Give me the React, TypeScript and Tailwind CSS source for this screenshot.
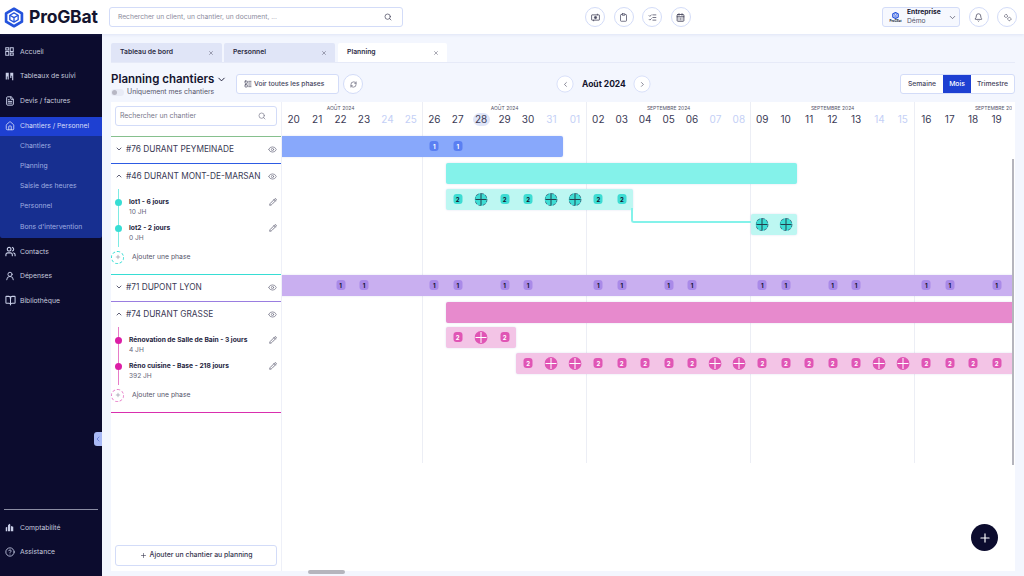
import React from 'react';
import {
  Bell,
  BookOpen,
  CalendarDays,
  ChevronDown,
  ChevronLeft,
  ChevronRight,
  ChevronUp,
  CircleHelp,
  Clipboard,
  Eye,
  FileText,
  House,
  LayoutList,
  ListChecks,
  Pencil,
  Plus,
  RefreshCw,
  Search,
  UserRound,
  Users,
  X,
} from 'lucide-react';

const FONT = 'font-["Inter","Liberation_Sans",sans-serif]';

// one day column in the planning, the first visible week is scrolled by one day
const DAY = 23.43;

const Logo = ({ className, small }: { className: string; small?: boolean }) => (
  <svg viewBox="0 0 24 24" className={className} fill="none" stroke="#2453dc" strokeLinejoin="round">
    <path d="M12 1.500 21.500 7v10L12 22.500 2.500 17V7z" strokeWidth={small ? 4 : 3.2} />
    <path d="M12 6.500 17 9.300v5.400l-5 2.800-5-2.800V9.300z" strokeWidth="1.600" />
    <path d="M7 9.300l5 2.800 5-2.800M12 12.100v5.400" strokeWidth="1.600" />
  </svg>
);

const GridIcon = () => (
  <svg viewBox="0 0 12 12" className="h-[9px] w-[9px]" fill="none" stroke="#c9cfe8" strokeWidth="1.300">
    <rect x="1" y="1" width="4" height="3" />
    <rect x="7" y="1" width="4" height="5" />
    <rect x="1" y="6" width="4" height="5" />
    <rect x="7" y="8" width="4" height="3" />
  </svg>
);

const BoardIcon = () => (
  <svg viewBox="0 0 12 12" className="h-[9px] w-[9px]" fill="#c9cfe8">
    <path d="M1 1h4v9H3.500V6H2.500v4H1zM7 1h4v10H9.500V5h-1v3H7z" />
  </svg>
);

const ChartIcon = () => (
  <svg viewBox="0 0 12 12" className="h-[9px] w-[9px]" fill="#c9cfe8">
    <path d="M1 11V6l2-1v6zM4 11V3l2-2 1 1v9zM8 11V4l3 1v6z" />
  </svg>
);

const GearsIcon = () => (
  <svg viewBox="0 0 12 12" className="h-[9px] w-[9px]" fill="none" stroke="#4a4a60" strokeWidth="1.100">
    <circle cx="4" cy="4" r="2" strokeDasharray="1.500 .6" />
    <circle cx="8.500" cy="8" r="2.200" strokeDasharray="1.500 .6" />
  </svg>
);

const MoneyIcon = () => (
  <svg viewBox="0 0 12 12" className="h-[9px] w-[9px]" fill="none" stroke="#4a4a60" strokeWidth="1.100">
    <rect x=".8" y="2.500" width="10.400" height="7" rx=".5" />
    <circle cx="6" cy="6" r="1.500" fill="#4a4a60" />
    <path d="M8.500 1v2M3.500 9v2" />
  </svg>
);

const menuTop = [
  { label: 'Accueil', icon: <GridIcon /> },
  { label: 'Tableaux de suivi', icon: <BoardIcon /> },
  { label: 'Devis / factures', icon: <FileText className="h-[10px] w-[10px]" strokeWidth={2.4} /> },
];
const subMenu = ['Chantiers', 'Planning', 'Saisie des heures', 'Personnel', "Bons d'intervention"];
const menuMid = [
  { label: 'Contacts', icon: <Users className="h-[11px] w-[11px]" strokeWidth={2.4} /> },
  { label: 'Dépenses', icon: <UserRound className="h-[10px] w-[10px]" strokeWidth={2.2} /> },
  { label: 'Bibliothèque', icon: <BookOpen className="h-[11px] w-[11px]" strokeWidth={2.2} /> },
];

const MenuItem = ({ label, icon }: { label: string; icon: React.ReactNode }) => (
  <div className="flex h-[24.500px] items-center pl-[5px] text-[6.800px] text-[#c6cade]">
    <span className="flex w-[15px] items-center text-[#c9cfe8]">{icon}</span>
    {label}
  </div>
);

const Sidebar = () => (
  <aside className="relative flex w-[102px] shrink-0 flex-col bg-[#0c0c2e] pt-[5.500px]">
    {menuTop.map((m) => (
      <MenuItem key={m.label} {...m} />
    ))}
    <div className="mt-[3.500px] flex h-[19px] items-center bg-[#1e40d2] pl-[5px] text-[6.800px] text-[#d8def8]">
      <span className="flex w-[15px] items-center">
        <House className="h-[10px] w-[10px]" strokeWidth={2} />
      </span>
      Chantiers / Personnel
    </div>
    <div className="mb-[1px] rounded-b-[2px] bg-[#172f90] pb-[1.500px]">
      {subMenu.map((s) => (
        <div key={s} className="flex h-[20.300px] items-center pl-[20px] text-[6.800px] text-[#9fade0]">
          {s}
        </div>
      ))}
    </div>
    {menuMid.map((m) => (
      <MenuItem key={m.label} {...m} />
    ))}
    <div className="mx-[4px] mt-auto border-t border-[#8b8da3]" />
    <div className="pt-[6px] pb-[11.500px]">
      <MenuItem label="Comptabilité" icon={<ChartIcon />} />
      <MenuItem label="Assistance" icon={<CircleHelp className="h-[10px] w-[10px]" strokeWidth={2} />} />
    </div>
    <div className="absolute top-[398px] right-0 flex h-[14px] w-[8px] items-center justify-center rounded-l-[3px] bg-[#a9b9f5] text-[#4a62c9]">
      <ChevronLeft className="h-[8px] w-[8px]" />
    </div>
  </aside>
);

const RoundButton = ({ children }: { children: React.ReactNode }) => (
  <div className="flex h-[20px] w-[20px] items-center justify-center rounded-full border border-[#d3dcf8] bg-white text-[#4a4a60]">
    {children}
  </div>
);

const Header = () => (
  <header className="relative z-10 flex h-[34px] shrink-0 items-center bg-white pr-[7px] pl-[4px] shadow-[0_1px_3px_rgba(90,110,190,0.12)]">
    <div className="flex w-[105px] items-center gap-[5px]">
      <Logo className="h-[21px] w-[20px] shrink-0" />
      <span className="text-[17.500px] leading-none font-bold tracking-[-0.2px] text-[#14142e]">ProGBat</span>
    </div>
    <div className="flex h-[20px] w-[294px] items-center justify-between rounded-[3px] border border-[#d3dcf8] pr-[10px] pl-[8px] text-[6.700px] text-[#8b8b9c]">
      Rechercher un client, un chantier, un document, ...
      <Search className="h-[8px] w-[8px] text-[#4a4a60]" strokeWidth={2.2} />
    </div>
    <div className="ml-[182px] flex gap-[8.500px]">
      <RoundButton>
        <MoneyIcon />
      </RoundButton>
      <RoundButton>
        <Clipboard className="h-[9px] w-[9px]" strokeWidth={2} />
      </RoundButton>
      <RoundButton>
        <ListChecks className="h-[9px] w-[9px]" strokeWidth={2} />
      </RoundButton>
      <RoundButton>
        <CalendarDays className="h-[9px] w-[9px]" strokeWidth={2.4} />
      </RoundButton>
    </div>
    <div className="ml-auto flex items-center gap-[8.500px]">
      <div className="flex h-[20px] w-[78px] items-center rounded-[3px] border border-[#d3dcf8] bg-[#f6f8fe] pl-[5px]">
        <div className="flex w-[15px] flex-col items-center">
          <Logo className="h-[7px] w-[7px]" small />
          <span className="text-[3px] leading-[4px] font-bold text-[#14142e]">ProGBat</span>
        </div>
        <div className="ml-[4px] flex flex-col text-[6.700px] leading-[9.500px]">
          <span className="font-bold text-[#14142e]">Entreprise</span>
          <span className="text-[#55556a]">Démo</span>
        </div>
        <ChevronDown className="mr-[2px] ml-auto h-[9px] w-[9px] text-[#55556a]" />
      </div>
      <RoundButton>
        <Bell className="h-[9px] w-[9px]" strokeWidth={2} />
      </RoundButton>
      <RoundButton>
        <GearsIcon />
      </RoundButton>
    </div>
  </header>
);

const Tab = ({ label, active, w }: { label: string; active?: boolean; w: string }) => (
  <div
    className={`flex h-[19px] items-center justify-between rounded-t-[2px] pr-[8px] pl-[9px] text-[6.800px] font-semibold text-[#2b2b44] ${w} ${
      active ? 'bg-white' : 'bg-[#e0e5f7]'
    }`}
  >
    {label}
    <X className="h-[6px] w-[6px] text-[#55556a]" />
  </div>
);

const TitleBar = () => (
  <div className="relative flex h-[40px] items-start border-t border-[#e6eaf8]">
    <div className="flex w-[125px] flex-col pt-[8px]">
      <div className="flex items-center gap-[2px] text-[11.500px] leading-[16px] font-semibold whitespace-nowrap text-[#14142e]">
        Planning chantiers
        <ChevronDown className="h-[11px] w-[11px]" />
      </div>
      <div className="flex items-center gap-[3px] text-[6.900px] whitespace-nowrap text-[#55556a]">
        <span className="relative h-[7px] w-[13px] rounded-full bg-[#e8ebf6]">
          <span className="absolute top-[1px] left-[1px] h-[5px] w-[5px] rounded-full bg-[#b7b7c4]" />
        </span>
        Uniquement mes chantiers
      </div>
    </div>
    <div className="mt-[11px] flex h-[20px] w-[103px] items-center gap-[2px] rounded-[3px] border border-[#d3dcf8] bg-white pl-[7px] text-[6.700px] font-medium text-[#44445c]">
      <LayoutList className="h-[8px] w-[8px]" />
      Voir toutes les phases
    </div>
    <div className="mt-[11px] ml-[4px]">
      <RoundButton>
        <RefreshCw className="h-[7px] w-[7px]" />
      </RoundButton>
    </div>
    <div className="mt-[11px] ml-[192px] flex h-[20px] items-center">
      <div className="scale-[0.85]">
        <RoundButton>
          <ChevronLeft className="h-[9px] w-[9px]" />
        </RoundButton>
      </div>
      <span className="ml-[7px] w-[50px] text-[8.500px] font-bold whitespace-nowrap text-[#14142e]">Août 2024</span>
      <div className="scale-[0.85]">
        <RoundButton>
          <ChevronRight className="h-[9px] w-[9px]" />
        </RoundButton>
      </div>
    </div>
    <div className="mt-[11px] ml-auto flex h-[20px] overflow-hidden rounded-[3px] border border-[#d3dcf8] bg-white text-[6.800px] font-medium text-[#44445c]">
      <span className="flex w-[42px] items-center justify-center">Semaine</span>
      <span className="flex w-[28px] items-center justify-center bg-[#1e40d2] text-white">Mois</span>
      <span className="flex w-[43px] items-center justify-center">Trimestre</span>
    </div>
  </div>
);

type Phase = { title: string; jh: string };
type Site = { name: string; line: string; open: boolean; solid: string; dot: string; ring: string; phases: Phase[] };

const sites: Site[] = [
  { name: '#76 DURANT PEYMEINADE', line: 'border-[#2d5be3]', open: false, solid: '', dot: '', ring: '', phases: [] },
  {
    name: '#46 DURANT MONT-DE-MARSAN',
    line: 'border-[#37ddd4]',
    open: true,
    solid: 'bg-[#7eebe4]',
    dot: 'bg-[#37ddd4]',
    ring: 'border-[#37ddd4]',
    phases: [
      { title: 'lot1 - 6 jours', jh: '10 JH' },
      { title: 'lot2 - 2 jours', jh: '0 JH' },
    ],
  },
  { name: '#71 DUPONT LYON', line: 'border-[#9a7de0]', open: false, solid: '', dot: '', ring: '', phases: [] },
  {
    name: '#74 DURANT GRASSE',
    line: 'border-[#d92fae]',
    open: true,
    solid: 'bg-[#e77cc8]',
    dot: 'bg-[#dc1ea6]',
    ring: 'border-[#e77cc8]',
    phases: [
      { title: 'Rénovation de Salle de Bain - 3 jours', jh: '4 JH' },
      { title: 'Réno cuisine - Base - 218 jours', jh: '392 JH' },
    ],
  },
];

const SiteRow = ({ site }: { site: Site }) => (
  <div className={`border-b-[1.500px] ${site.line} ${site.open ? 'h-[111px]' : 'h-[27px]'}`}>
    <div className="flex h-[25.500px] items-center pr-[4px] pl-[4px] text-[#3a3a55]">
      {site.open ? (
        <ChevronUp className="h-[8px] w-[8px] shrink-0" strokeWidth={2.4} />
      ) : (
        <ChevronDown className="h-[8px] w-[8px] shrink-0" strokeWidth={2.4} />
      )}
      <span className="ml-[3px] text-[8.300px] whitespace-nowrap">{site.name}</span>
      <Eye className="ml-auto h-[9px] w-[9px] shrink-0 text-[#77778a]" />
    </div>
    {site.open && (
      <div className="relative pl-[18px]">
        <div className={`absolute top-0 left-[6.500px] h-[58px] w-[1.500px] ${site.solid}`} />
        <div className={`absolute top-[70px] left-[6.500px] h-[5px] w-[1.500px] ${site.solid}`} />
        <div className="h-[8px]" />
        {site.phases.map((p) => (
          <div key={p.title} className="relative flex h-[26px] items-start pr-[4px]">
            <span className={`absolute top-[1.500px] left-[-14.500px] h-[7px] w-[7px] rounded-full ${site.dot}`} />
            <div className="flex flex-col">
              <span className="text-[6.700px] leading-[10px] font-bold text-[#24243e]">{p.title}</span>
              <span className="text-[6.600px] leading-[10px] text-[#66667a]">{p.jh}</span>
            </div>
            <Pencil className="mt-[1px] ml-auto h-[8px] w-[8px] shrink-0 text-[#66667a]" strokeWidth={2.4} />
          </div>
        ))}
        <div className="relative mt-[1px] flex h-[14px] items-center pl-[3px] text-[6.800px] text-[#55556a]">
          <span
            className={`absolute left-[-18px] flex h-[13px] w-[13px] items-center justify-center rounded-full border border-dashed bg-white ${site.ring}`}
          >
            <Plus className="h-[6px] w-[6px] text-[#77778a]" />
          </span>
          Ajouter une phase
        </div>
      </div>
    )}
  </div>
);

const LeftPanel = () => (
  <div className="flex w-[171px] shrink-0 flex-col border-r border-[#eef0f8] bg-white">
    <div className="h-[34.500px] border-b-[1.500px] border-[#86c08e] px-[4px] pt-[4px]">
      <div className="flex h-[20px] items-center justify-between rounded-[3px] border border-[#d3dcf8] pr-[10px] pl-[4px] text-[6.900px] text-[#77778a]">
        Rechercher un chantier
        <Search className="h-[8px] w-[8px]" />
      </div>
    </div>
    {sites.map((s) => (
      <SiteRow key={s.name} site={s} />
    ))}
    <div className="mx-[4px] mt-auto mb-[5px] flex h-[21px] items-center justify-center gap-[3px] rounded-[3px] border border-[#d3dcf8] text-[6.900px] font-medium text-[#33334c]">
      <Plus className="h-[7px] w-[7px]" />
      Ajouter un chantier au planning
    </div>
  </div>
);

const weeks = [
  { label: 'AOÛT 2024', days: ['19', '20', '21', '22', '23', '24', '25'] },
  { label: 'AOÛT 2024', days: ['26', '27', '28', '29', '30', '31', '01'] },
  { label: 'SEPTEMBRE 2024', days: ['02', '03', '04', '05', '06', '07', '08'] },
  { label: 'SEPTEMBRE 2024', days: ['09', '10', '11', '12', '13', '14', '15'] },
  { label: 'SEPTEMBRE 2024', days: ['16', '17', '18', '19', '20', '21', '22'] },
];

const WeekHeader = () => (
  <div className="flex h-[34px]">
    {weeks.map((w, i) => (
      <div key={i} className="w-[164px] shrink-0">
        <div className="pt-[3px] text-center text-[5px] leading-[7px] text-[#55556a]">{w.label}</div>
        <div className="mt-[1px] flex">
          {w.days.map((d, j) => (
            <div key={d} className="flex w-[23.430px] justify-center">
              <span
                className={`flex h-[13px] w-[17px] items-center justify-center rounded-full text-[10px] ${
                  j > 4 ? 'text-[#c4d0f6]' : 'text-[#3a3a55]'
                } ${d === '28' ? 'bg-[#dfe5f8]' : ''}`}
              >
                {d}
              </span>
            </div>
          ))}
        </div>
      </div>
    ))}
  </div>
);

type Tone = 'blue' | 'cyan' | 'purple' | 'pink';

const badgeTone: Record<Tone, string> = {
  blue: 'bg-[#5a7ff2] text-white',
  cyan: 'bg-[#3ddcd3] text-[#14142e]',
  purple: 'bg-[#a98ae8] text-[#14142e]',
  pink: 'bg-[#e055b5] text-white',
};

// value > 0 is a badge, 0 is a free day with the plus mark
const Marker = ({ tone, value, left }: { tone: Tone; value: number; left: number }) => {
  const style = { left };
  if (value > 0) {
    return (
      <span
        className={`absolute top-[5px] flex h-[10px] w-[9px] -translate-x-1/2 items-center justify-center rounded-[3px] text-[6px] font-bold ${badgeTone[tone]}`}
        style={style}
      >
        {value}
      </span>
    );
  }
  const pink = tone === 'pink';
  return (
    <span
      className={`absolute top-[3.500px] h-[13px] w-[13px] -translate-x-1/2 rounded-full border border-dashed ${
        pink ? 'border-[#e055b5] bg-[#e055b5]' : 'border-[#3a6a80] bg-[#3ddcd3]'
      }`}
      style={style}
    >
      <span className={`absolute top-[5px] left-0 h-px w-[11px] ${pink ? 'bg-white' : 'bg-[#24404e]'}`} />
      <span className={`absolute top-0 left-[5px] h-[11px] w-px ${pink ? 'bg-white' : 'bg-[#24404e]'}`} />
    </span>
  );
};

type Bar = {
  top: number;
  from: number;
  to: number;
  color: string;
  tone?: Tone;
  marks?: [number, number][];
  link?: boolean;
};

const pick = (value: number, idx: number[]) => idx.map((i): [number, number] => [i, value]);

const bars: Bar[] = [
  { top: 0, from: 0, to: 13, color: 'bg-[#88a8fb]', tone: 'blue', marks: pick(1, [7, 8]) },
  { top: 27.300, from: 8, to: 23, color: 'bg-[#84f2ea]' },
  {
    top: 53,
    from: 8,
    to: 16,
    color: 'bg-[#bdf7f2]',
    tone: 'cyan',
    marks: [[8, 2], [9, 0], [10, 2], [11, 2], [12, 0], [13, 0], [14, 2], [15, 2]],
  },
  { top: 78.300, from: 21, to: 23, color: 'bg-[#bdf7f2]', tone: 'cyan', marks: pick(0, [21, 22]), link: true },
  {
    top: 139,
    from: 0,
    to: 33,
    color: 'bg-[#c9aff0]',
    tone: 'purple',
    marks: pick(1, [3, 4, 7, 8, 10, 11, 14, 15, 17, 18, 21, 22, 24, 25, 28, 29, 31]),
  },
  { top: 166, from: 8, to: 33, color: 'bg-[#e78acd]' },
  { top: 191, from: 8, to: 11, color: 'bg-[#f3c4e6]', tone: 'pink', marks: [[8, 2], [9, 0], [10, 2]] },
  {
    top: 217,
    from: 11,
    to: 33,
    color: 'bg-[#f3c4e6]',
    tone: 'pink',
    marks: [11, 12, 13, 14, 15, 16, 17, 18, 19, 20, 21, 22, 23, 24, 25, 26, 27, 28, 29, 30, 31].map(
      (i): [number, number] => [i, [12, 13, 19, 20, 26, 27].includes(i) ? 0 : 2],
    ),
  },
];

const Timeline = () => (
  <div className="relative min-w-0 flex-1 bg-white">
    <div className="relative mr-[3px] h-full overflow-hidden">
      <div className="absolute top-0 left-[-23.400px] flex h-[361px]">
        {weeks.map((_, i) => (
          <div key={i} className="h-full w-[164px] shrink-0 border-r border-[#eceef5]" />
        ))}
      </div>
      <div className="relative ml-[-23.400px] w-[820px]">
        <WeekHeader />
        <div className="relative">
          {bars.map((b, i) => (
            <div
              key={i}
              className={`absolute h-[20.500px] rounded-[2px] shadow-[0_0_2px_rgba(120,130,200,0.25)] ${b.color}`}
              style={{ top: b.top, left: b.from * DAY, width: (b.to - b.from) * DAY }}
            >
              {b.link && (
                <span className="absolute top-[-6px] right-full h-[15px] w-[120px] rounded-bl-[3px] border-b-2 border-l-2 border-[#84f2ea]" />
              )}
              {b.marks?.map(([day, v]) => (
                <Marker key={day} tone={b.tone as Tone} value={v} left={(day - b.from + 0.5) * DAY} />
              ))}
            </div>
          ))}
        </div>
      </div>
    </div>
    <div className="absolute top-[57px] right-[1px] h-[306px] w-[2px] bg-[#b5b5bd]" />
    <div className="absolute bottom-[-3px] left-[26px] h-[4px] w-[37px] rounded-full bg-[#b5b5bd]" />
    <div className="absolute right-[17px] bottom-[20px] flex h-[27px] w-[27px] items-center justify-center rounded-full bg-[#0c0c2e] text-white">
      <Plus className="h-[14px] w-[14px]" />
    </div>
  </div>
);

const App = () => (
  <div className={`flex h-[576px] w-[1024px] flex-col overflow-hidden bg-white ${FONT}`}>
    <Header />
    <div className="flex min-h-0 flex-1">
      <Sidebar />
      <main className="flex min-w-0 flex-1 flex-col bg-[#f3f6fe] pt-[9px] pr-[9px] pb-[5px] pl-[9px]">
        <div className="flex gap-[2px]">
          <Tab label="Tableau de bord" w="w-[111px]" />
          <Tab label="Personnel" w="w-[111px]" />
          <Tab label="Planning" w="ml-[1px] w-[109px]" active />
        </div>
        <TitleBar />
        <div className="flex min-h-0 flex-1">
          <LeftPanel />
          <Timeline />
        </div>
      </main>
    </div>
  </div>
);

export default App;
